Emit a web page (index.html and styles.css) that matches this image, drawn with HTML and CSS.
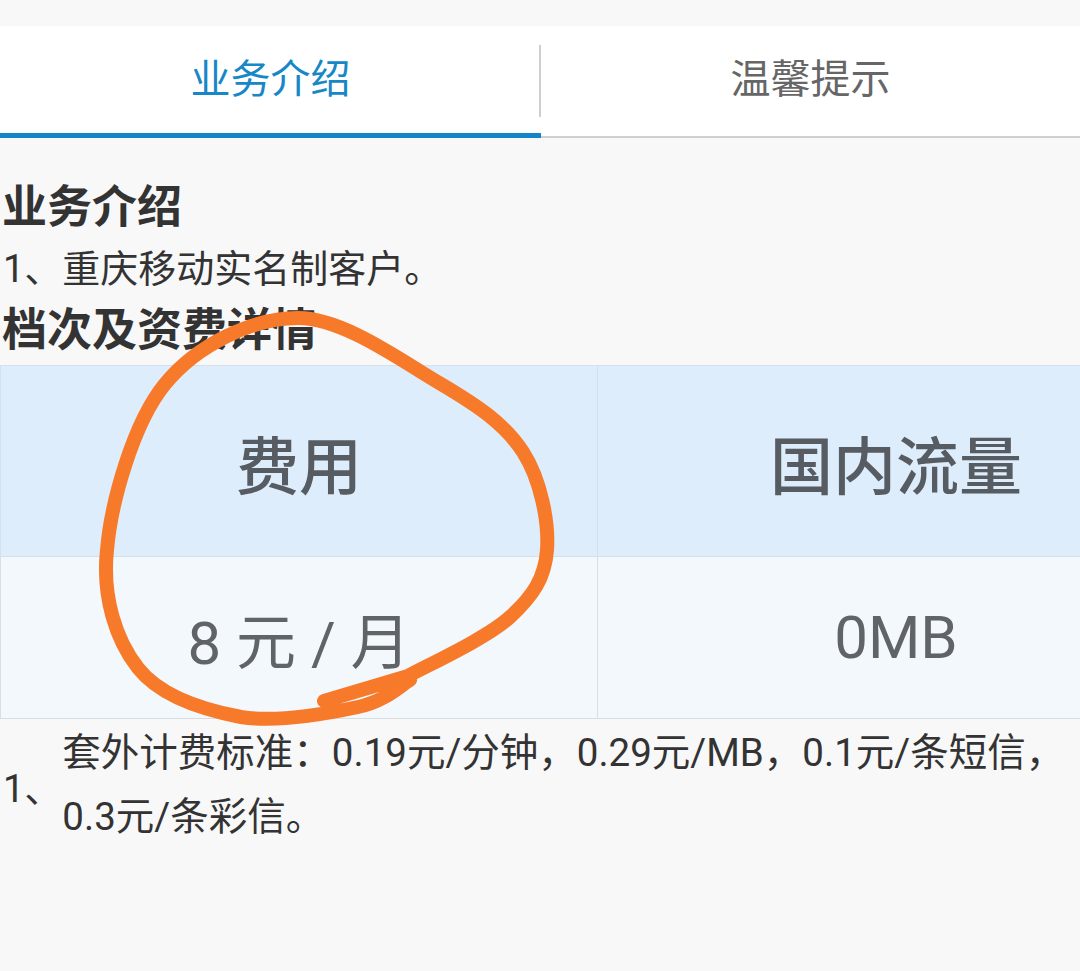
FILE: index.html
```html
<!DOCTYPE html>
<html lang="zh-CN">

<head>
    <meta charset="UTF-8">
    <meta name="viewport" content="width=device-width, initial-scale=1.0">
    <title>业务介绍</title>
    <link rel="stylesheet" href="styles.css">
</head>

<body>
    <div class="page">
        <div class="tabs">
            <div class="tab active">业务介绍</div>
            <div class="tab">温馨提示</div>
        </div>

        <div class="content">
            <h2 class="title title-first">业务介绍</h2>
            <p class="line">1、重庆移动实名制客户。</p>
            <h2 class="title">档次及资费详情</h2>

            <table class="price">
                <colgroup>
                    <col class="col-fee">
                    <col class="col-data">
                </colgroup>
                <tr>
                    <th>费用</th>
                    <th>国内流量</th>
                </tr>
                <tr>
                    <td>8 元 / 月</td>
                    <td>0MB</td>
                </tr>
            </table>

            <div class="note">
                <span class="note-num">1、</span>
                <span class="note-text">套外计费标准：0.19元/分钟，0.29元/MB，0.1元/条短信，0.3元/条彩信。</span>
            </div>
        </div>

        <!-- hand-drawn mark over the price -->
        <svg class="mark" width="1080" height="971" viewBox="0 0 1080 971">
            <path d="M324 701 L408 676
                     C430 664 487 638 510 617
                     C533 596 545 578 547 550
                     C549 523 541 480 523 452
                     C505 424 478 406 441 384
                     C403 362 344 318 298 318
                     C252 318 197 345 165 384
                     C133 423 111 503 107 550
                     C102 597 116 640 138 668
                     C160 696 204 710 241 717
                     C278 723 330 713 358 707
                     C386 701 401 685 410 680"
                fill="none" stroke="#f77a2b" stroke-width="14" stroke-linecap="round" stroke-linejoin="round" />
        </svg>
    </div>
</body>

</html>
```

FILE: styles.css
```css
html,
body {
    margin: 0;
    overflow: hidden;
}

body {
    font-family: Roboto, "Noto Sans CJK SC", sans-serif;
    background-color: #f8f8f8;
    color: #333;
}

.page {
    position: relative;
    width: 1080px;
    height: 971px;
    overflow: hidden;
    padding-top: 26px;
    box-sizing: border-box;
}

/* tabs */
.tabs {
    display: flex;
    background-color: #fff;
    border-bottom: 2px solid #d0d0d0;
}

.tab {
    position: relative;
    flex: 1;
    height: 100px;
    padding-bottom: 7px;
    display: flex;
    justify-content: center;
    align-items: center;
    font-family: "Noto Sans CJK SC", sans-serif;
    font-size: 40px;
    color: #666;
    border-bottom: 5px solid transparent;
    margin-bottom: -2px;
}

.tab:first-child {
    flex: 0 0 541px;
}

.tab:first-child::after {
    content: "";
    position: absolute;
    right: 0;
    top: 19px;
    width: 2px;
    height: 72px;
    background-color: #cfcfcf;
}

.tab.active {
    color: #1787c7;
    border-bottom-color: #1185c6;
}

/* content */
.title {
    margin: 0;
    padding-left: 2px;
    font-family: "Noto Sans CJK SC", sans-serif;
    font-size: 45px;
    line-height: 56px;
    font-weight: 700;
    color: #333;
}

.title-first {
    margin-top: 38px;
}

.line {
    margin: 7px 0 0;
    padding-left: 3px;
    font-size: 38px;
    line-height: 60px;
}

.price {
    margin-top: 10px;
    width: 1195px;
    table-layout: fixed;
    border-collapse: collapse;
    text-align: center;
}

.col-fee {
    width: 597px;
}

.price th,
.price td {
    border: 1px solid #d4e0ea;
    padding: 0;
}

.price th {
    height: 190px;
    background-color: #ddedfb;
    font-family: "Noto Sans CJK SC", sans-serif;
    font-size: 63px;
    font-weight: 500;
    color: #575c62;
}

.price td {
    height: 161px;
    background-color: #f3f8fd;
    font-size: 60px;
    color: #606367;
}

.price tr:last-child td {
    border-bottom-color: #d8dde2;
}

.note {
    display: flex;
    align-items: center;
    margin-top: 2px;
}

.note-num {
    flex: 0 0 59px;
    padding-left: 3px;
    font-size: 38px;
}

.note-text {
    width: 1012px;
    font-size: 38.5px;
    line-height: 64px;
}

/* annotation */
.mark {
    position: absolute;
    left: 0;
    top: 0;
    pointer-events: none;
}
```
